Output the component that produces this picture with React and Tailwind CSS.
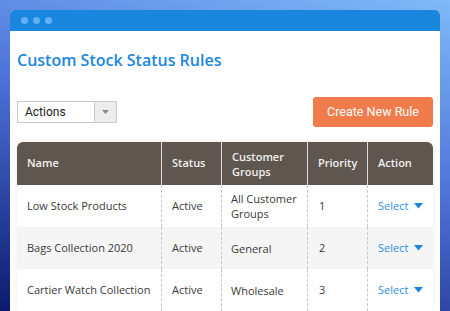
import React from "react";

const rows = [
  { name: "Low Stock Products", status: "Active", group: ["All Customer", "Groups"], pr: "1", alt: false },
  { name: "Bags Collection 2020", status: "Active", group: ["General"], pr: "2", alt: true },
  { name: "Cartier Watch Collection", status: "Active", group: ["Wholesale"], pr: "3", alt: false },
];

function Caret({ className }) {
  return (
    <svg width="9" height="6" viewBox="0 0 9 6" className={className}>
      <path d="M0 0 H9 L4.5 5.5 Z" fill="currentColor" />
    </svg>
  );
}

export default function App() {
  return (
    <div className="h-[311px] w-[450px] overflow-hidden bg-[linear-gradient(195deg,#80baf9_0%,#4f73d8_45%,#0b1a6e_100%)] pt-[10px] pl-[10px]">
      <div className="w-[430px] h-[320px] rounded-t-[5px] bg-white overflow-hidden">
        <div className="h-[21px] bg-[#1a86dd] flex items-center gap-[5px] pl-[11px]">
          <span className="w-[7px] h-[7px] rounded-full bg-[#5eb1f8]" />
          <span className="w-[7px] h-[7px] rounded-full bg-[#5eb1f8]" />
          <span className="w-[7px] h-[7px] rounded-full bg-[#5eb1f8]" />
        </div>
        <div className="pl-[7px] pr-[7px]">
          <h1 className="mt-[19px] h-[20px] leading-[20px] text-[16px] font-semibold text-[#1a87dd] font-['Open_Sans',sans-serif]">
            Custom Stock Status Rules
          </h1>
          <div className="mt-[27px] flex items-center justify-between">
            <div className="w-[100px] h-[22px] border border-[#c9c9c9] flex font-['Roboto',sans-serif] text-[12px] text-[#222]">
              <div className="flex-1 flex items-center pl-[7px]">Actions</div>
              <div className="w-[22px] border-l border-[#c9c9c9] bg-[#ececec] flex items-center justify-center text-[#888]">
                <svg width="7" height="4" viewBox="0 0 7 4"><path d="M0 0H7L3.5 4Z" fill="currentColor" /></svg>
              </div>
            </div>
            <button className="w-[120px] h-[30px] rounded-[3px] bg-[#f17c4b] text-white text-[12.5px] font-['Roboto',sans-serif]">
              Create New Rule
            </button>
          </div>
          <div className="mt-[15px] w-[416px] rounded-t-[6px] overflow-hidden shadow-[0_0_6px_rgba(0,0,0,0.08)] font-['Open_Sans',sans-serif] text-[11px]">
            <div className="flex h-[43px] bg-[#5f5650] text-[#f3f0ee] font-semibold">
              <div className="w-[144px] flex items-center pl-[10px]">Name</div>
              <div className="w-[60px] flex items-center pl-[10px] border-l border-[#e2dcd8]">Status</div>
              <div className="w-[86px] flex items-center pl-[10px] border-l border-[#e2dcd8] leading-[15px]">Customer<br />Groups</div>
              <div className="w-[60px] flex items-center pl-[10px] border-l border-[#e2dcd8]">Priority</div>
              <div className="flex-1 flex items-center pl-[10px] border-l border-[#e2dcd8]">Action</div>
            </div>
            {rows.map((r, i) => (
              <div key={i} className={`flex h-[42px] text-[#3a3a3a] ${r.alt ? "bg-[#f5f5f5]" : "bg-white"}`}>
                <div className="w-[144px] flex items-center pl-[10px]">{r.name}</div>
                <div className="w-[60px] flex items-center pl-[10px] border-l border-dashed border-[#c8c8c8]">{r.status}</div>
                <div className="w-[86px] flex items-center pl-[9px] border-l border-dashed border-[#c8c8c8] leading-[15px]">
                  <span>
                    {r.group.map((g, j) => (
                      <React.Fragment key={j}>
                        {j > 0 && <br />}
                        {g}
                      </React.Fragment>
                    ))}
                  </span>
                </div>
                <div className="w-[60px] flex items-center pl-[11px] border-l border-dashed border-[#c8c8c8]">{r.pr}</div>
                <div className="flex-1 flex items-center pl-[10px] border-l border-dashed border-[#c8c8c8] text-[#2f8fe2] gap-[6px]">
                  <span>Select</span>
                  <Caret className="text-[#1b86e0]" />
                </div>
              </div>
            ))}
          </div>
        </div>
      </div>
    </div>
  );
}
